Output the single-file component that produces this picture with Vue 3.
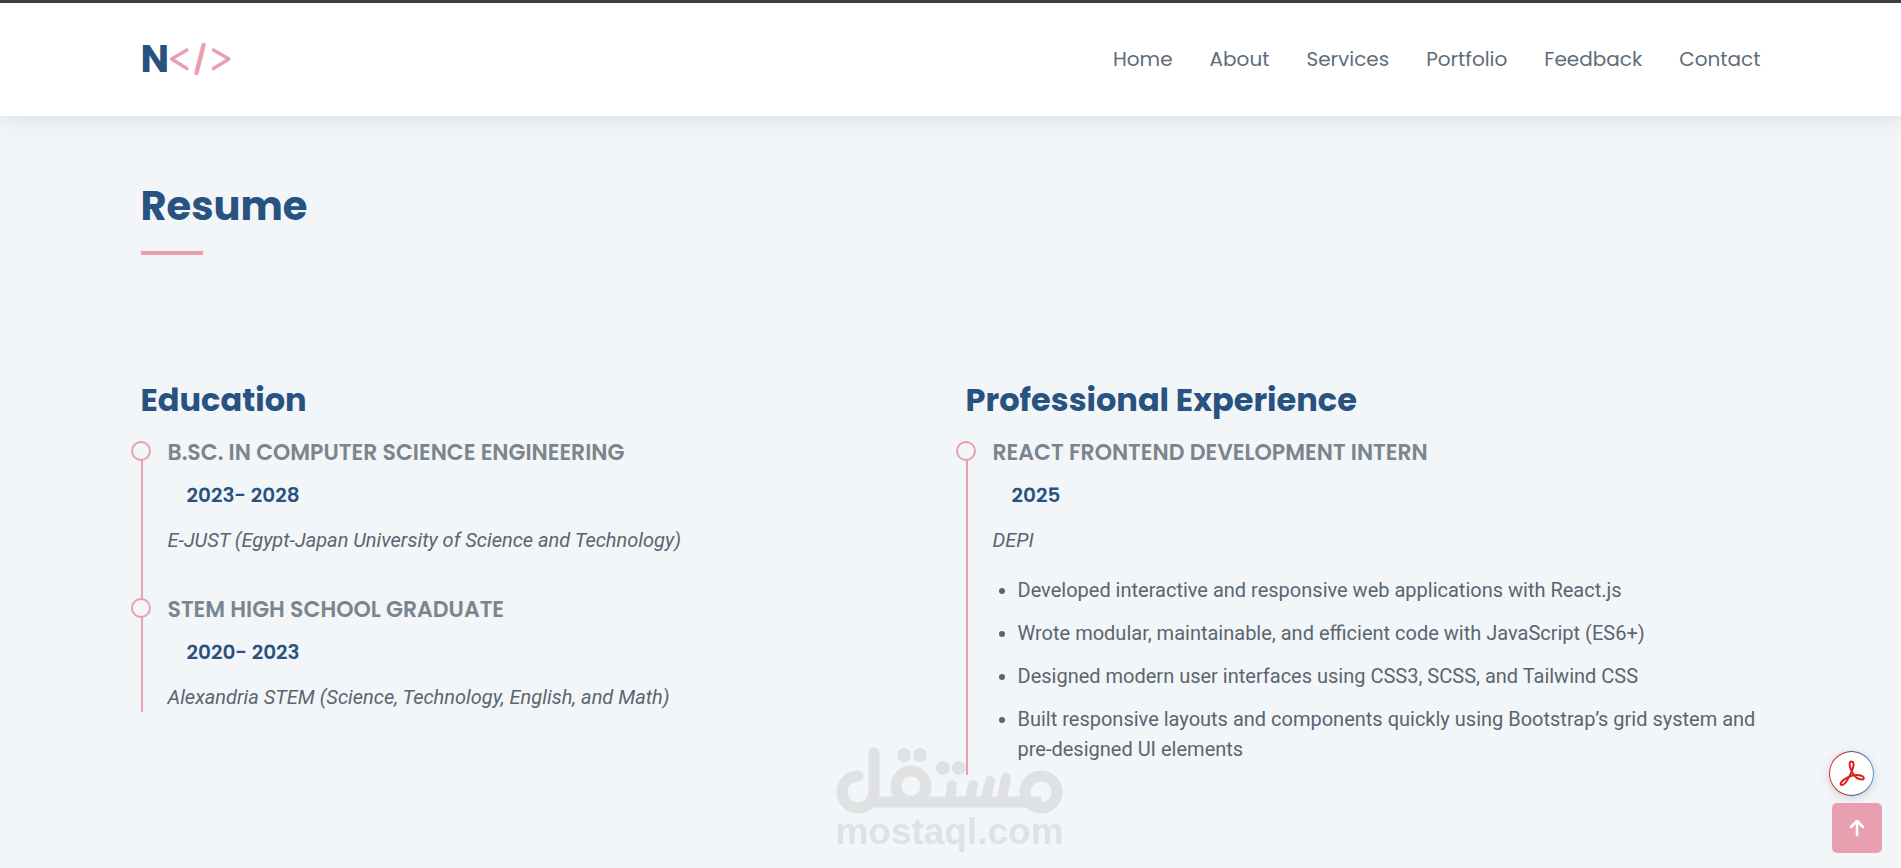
<script setup>
const links = ['Home', 'About', 'Services', 'Portfolio', 'Feedback', 'Contact']

const columns = [
  {
    title: 'Education',
    items: [
      { role: 'B.Sc. in Computer Science Engineering', date: '2023- 2028', place: 'E-JUST (Egypt-Japan University of Science and Technology)' },
      { role: 'STEM High School Graduate', date: '2020- 2023', place: 'Alexandria STEM (Science, Technology, English, and Math)' }
    ]
  },
  {
    title: 'Professional Experience',
    items: [
      {
        role: 'React Frontend Development Intern',
        date: '2025',
        place: 'DEPI',
        points: [
          'Developed interactive and responsive web applications with React.js',
          'Wrote modular, maintainable, and efficient code with JavaScript (ES6+)',
          'Designed modern user interfaces using CSS3, SCSS, and Tailwind CSS',
          'Built responsive layouts and components quickly using Bootstrap’s grid system and pre-designed UI elements'
        ]
      }
    ]
  }
]
</script>

<template>
  <div class="page">
    <header class="header">
      <div class="container bar">
        <a class="logo" href="#home" aria-label="N code">
          <span>N</span>
          <svg width="64" height="34" viewBox="0 0 64 34" aria-hidden="true">
            <path d="M18 8 2.500 17 18 26.500M44.500 8 60 17 44.500 26.500" stroke-width="3.400" />
            <path d="M34.500 3 27.500 31" stroke-width="4.400" />
          </svg>
        </a>
        <nav class="nav">
          <a v-for="link in links" :key="link" :href="'#' + link.toLowerCase()">{{ link }}</a>
        </nav>
      </div>
    </header>

    <main class="container">
      <h2 class="title">Resume</h2>
      <div class="columns">
        <section v-for="col in columns" :key="col.title">
          <h3 class="heading">{{ col.title }}</h3>
          <article v-for="item in col.items" :key="item.role" class="item">
            <h4>{{ item.role }}</h4>
            <h5>{{ item.date }}</h5>
            <p><em>{{ item.place }}</em></p>
            <ul v-if="item.points">
              <li v-for="point in item.points" :key="point">{{ point }}</li>
            </ul>
          </article>
        </section>
      </div>
    </main>

    <div class="watermark">
      <svg width="228" height="68" viewBox="0 0 228 68" role="img" aria-label="مستقل">
        <g fill="none" stroke-linecap="round" stroke-width="11">
          <path d="M22 29A16 16 0 1 0 38 45V6" />
          <path d="M34 55H205" stroke-linecap="butt" />
          <circle cx="75" cy="39" r="15" />
          <circle cx="205" cy="45" r="16" />
          <path d="M116 38 114 52M137 38 134 52M154 34 150 52M170 31 166 52" stroke-width="10" />
        </g>
        <g stroke="none">
          <circle cx="68" cy="8" r="7" />
          <circle cx="84" cy="8" r="7" />
          <circle cx="107" cy="21" r="7" />
          <circle cx="123" cy="21" r="7" />
        </g>
      </svg>
      <span>mostaql.com</span>
    </div>

    <div class="floating">
      <button class="pdf" type="button" aria-label="Open PDF">
        <svg width="26" height="27" viewBox="0 0 26 27" aria-hidden="true">
          <path d="M12.500 1.500C9.500 1.500 10.500 7 13 12C15 16 19 19.500 23 19.500C26.500 19.500 25 15 18 15C12 15 5.500 18.500 2.500 22C0 25 3.500 27 7 22C10.500 17 15 8 14.500 4C14.300 2.300 13.500 1.500 12.500 1.500Z" />
        </svg>
      </button>
      <a class="top" href="#top" aria-label="Back to top">
        <svg width="16" height="18" viewBox="0 0 16 18" aria-hidden="true">
          <path d="M8 16V2M2 8 8 2 14 8" />
        </svg>
      </a>
    </div>
  </div>
</template>

<style>
body {
  margin: 0;
  background: #f2f6f9;
}
</style>

<style scoped>
.page {
  min-height: 100vh;
  box-sizing: border-box;
  border-top: 3px solid #3f3f3f;
  color: #5a6570;
  font: 20px/30px Roboto, sans-serif;
}
.container {
  width: calc(100% - 48px);
  max-width: 1620px;
  margin: 0 auto;
}
.header {
  background: #fff;
  box-shadow: 0 0 22px rgba(50, 60, 70, 0.16);
}
.bar {
  display: flex;
  align-items: center;
  justify-content: space-between;
  box-sizing: border-box;
  min-height: 113px;
  padding-bottom: 2px;
}
.logo {
  display: flex;
  align-items: center;
  color: #28527f;
  font: 700 38px/44px Poppins, Inter, sans-serif;
  text-decoration: none;
}
.logo svg {
  fill: none;
  stroke: #e8a0ae;
  stroke-linecap: round;
  stroke-linejoin: round;
}
.nav {
  display: flex;
  gap: 37px;
}
.nav a {
  color: #5f6d7a;
  font: 400 20px/30px Poppins, Inter, sans-serif;
  text-decoration: none;
}
.title,
.heading,
h4,
h5 {
  margin: 0;
  color: #28527f;
  font-family: Poppins, Inter, sans-serif;
}
.title {
  padding-top: 66px;
  font-size: 40px;
  font-weight: 700;
  line-height: 48px;
}
.title::after {
  content: '';
  display: block;
  width: 62px;
  height: 4px;
  margin-top: 21px;
  background: #e8a0ae;
}
.columns {
  display: grid;
  grid-template-columns: 1fr 1fr;
  gap: 30px;
  padding-top: 125px;
}
.heading {
  padding-bottom: 22px;
  font-size: 32px;
  font-weight: 700;
  line-height: 39px;
}
.item {
  position: relative;
  padding: 0 0 43px 25px;
  border-left: 2px solid #e8a0ae;
}
.item:last-child {
  padding-bottom: 0;
}
.item::before {
  content: '';
  position: absolute;
  top: 0;
  left: -12px;
  box-sizing: border-box;
  width: 20px;
  height: 20px;
  border: 2px solid #e8a0ae;
  border-radius: 50%;
  background: #f2f6f9;
}
h4 {
  color: #7b858d;
  font-size: 22px;
  font-weight: 600;
  line-height: 24px;
  text-transform: uppercase;
}
h5 {
  padding: 15px 19px;
  font-size: 20px;
  font-weight: 600;
  line-height: 30px;
}
p {
  margin: 0;
}
ul {
  margin: 20px 0 0;
  padding-left: 25px;
}
li {
  padding-bottom: 13px;
}
li:last-child {
  padding-bottom: 11px;
}
.watermark {
  position: fixed;
  left: 50%;
  bottom: 19px;
  display: flex;
  flex-direction: column;
  align-items: center;
  width: 228px;
  margin-left: -115px;
  color: #dfe1e3;
  font: 700 37px/34px "Liberation Sans", Arial, sans-serif;
}
.watermark svg {
  fill: currentColor;
  stroke: currentColor;
}
.floating {
  position: fixed;
  right: 19px;
  bottom: 15px;
  display: grid;
  gap: 7px;
}
.pdf {
  display: grid;
  place-items: center;
  box-sizing: border-box;
  width: 45px;
  height: 45px;
  margin-left: -3px;
  padding: 0;
  border: 1px solid transparent;
  border-radius: 50%;
  background: linear-gradient(#fff, #fff) padding-box, linear-gradient(90deg, #d92b25 15%, #5a4a62 50%, #4b8fe0) border-box;
  box-shadow: 0 2px 8px rgba(50, 60, 70, 0.2);
}
.pdf svg {
  fill: none;
  stroke: #d9221c;
  stroke-width: 2;
}
.top {
  display: grid;
  place-items: center;
  width: 50px;
  height: 50px;
  border-radius: 5px;
  background: #e8a0b0;
}
.top svg {
  fill: none;
  stroke: #fff;
  stroke-width: 2.500;
  stroke-linecap: round;
  stroke-linejoin: round;
}
</style>
